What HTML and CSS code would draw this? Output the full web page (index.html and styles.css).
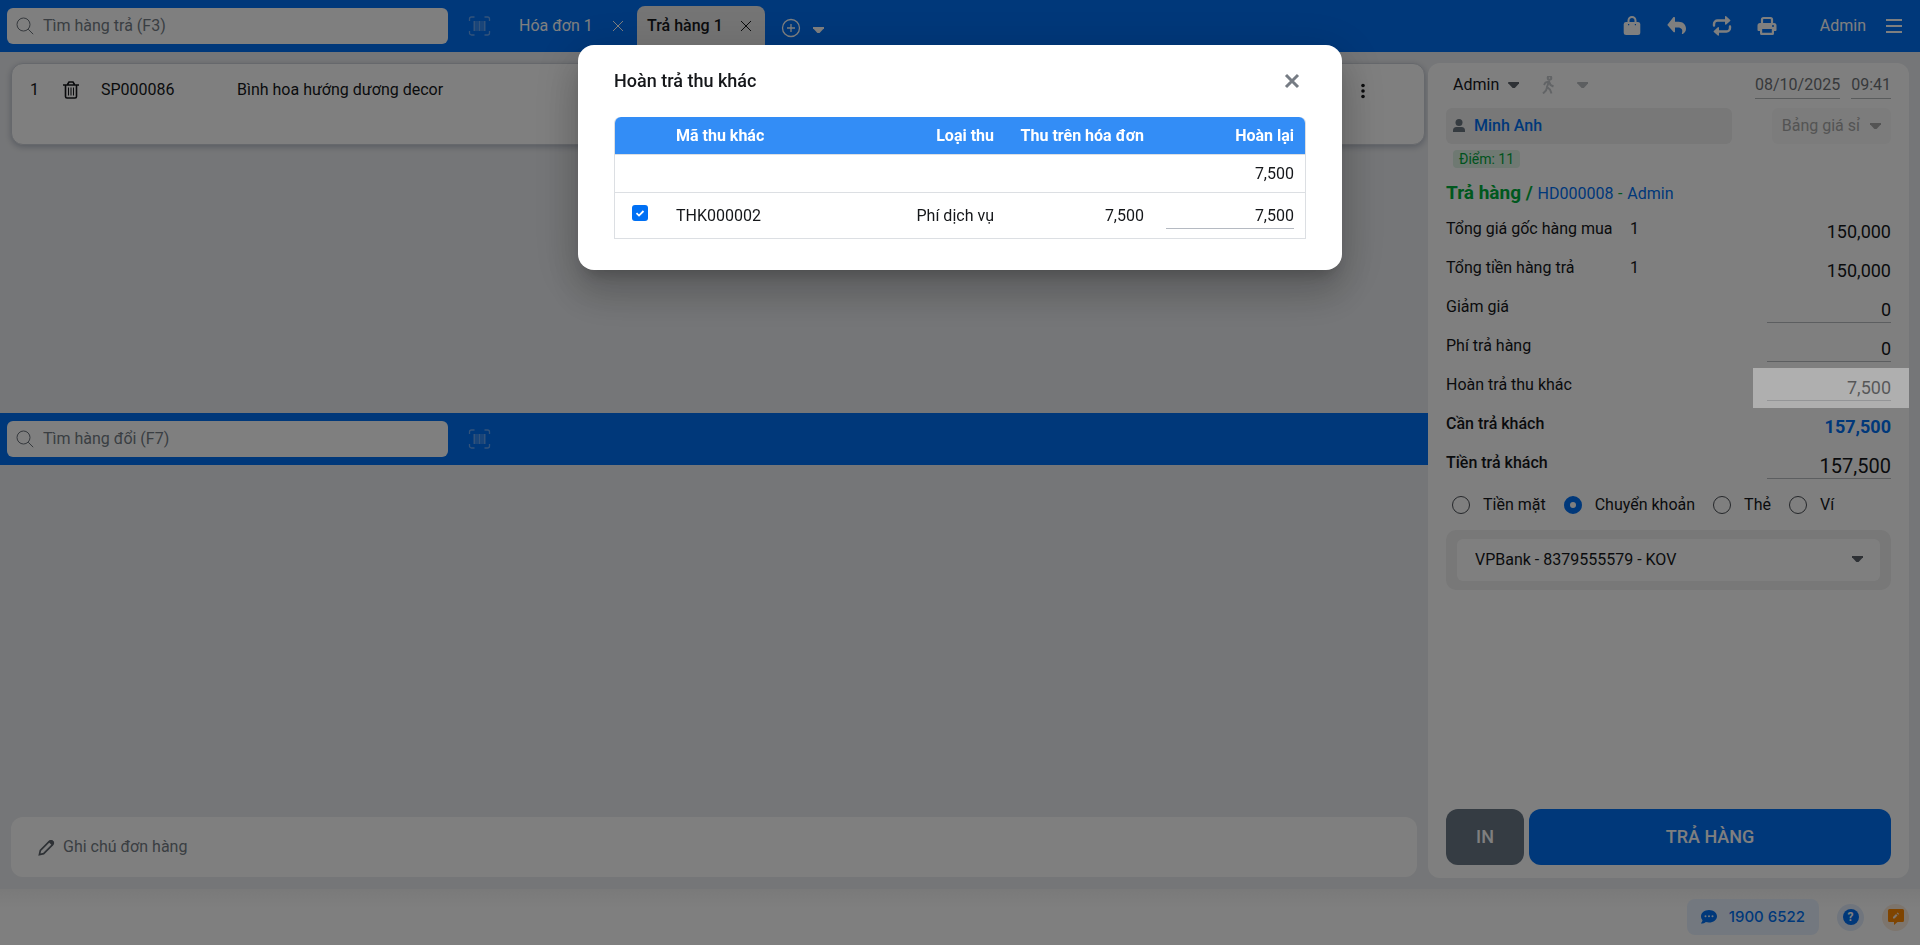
FILE: index.html
```html
<!DOCTYPE html>
<html lang="vi">

<head>
    <meta charset="UTF-8">
    <meta name="viewport" content="width=device-width, initial-scale=1">
    <title>Trả hàng</title>
    <link rel="stylesheet" href="styles.css">
</head>

<body>

    <header class="topbar">
        <label class="search">
            <svg class="search-icon" viewBox="0 0 18 18"><circle cx="7.5" cy="7.5" r="6.5" /><path d="M12.2 12.2l5 5" /></svg>
            <input type="text" placeholder="Tìm hàng trả (F3)" aria-label="Tìm hàng trả">
        </label>
        <button class="barcode" aria-label="Quét mã vạch">
            <svg viewBox="0 0 22 20"><path class="frame" d="M1 5V3a2 2 0 0 1 2-2h3M16 1h3a2 2 0 0 1 2 2v2M21 15v2a2 2 0 0 1-2 2h-3M6 19H3a2 2 0 0 1-2-2v-2" /><path class="bars" d="M5 5h2v10H5zM8 5h1v10H8zM10 5h2v10h-2zM13 5h1v10h-1zM15 5h2v10h-2z" /></svg>
        </button>
        <nav class="tabs">
            <div class="tab">
                <a href="#">Hóa đơn 1</a>
                <button aria-label="Đóng"><svg viewBox="0 0 12 12"><path d="M1 1l10 10M11 1L1 11" /></svg></button>
            </div>
            <div class="tab active">
                <a href="#">Trả hàng 1</a>
                <button aria-label="Đóng"><svg viewBox="0 0 12 12"><path d="M1 1l10 10M11 1L1 11" /></svg></button>
            </div>
            <button class="add-tab" aria-label="Thêm">
                <svg viewBox="0 0 20 20"><circle cx="10" cy="10" r="8.5" /><path d="M10 6v8M6 10h8" /></svg>
            </button>
            <button class="more-tab" aria-label="Chọn loại"><span class="caret"></span></button>
        </nav>
        <div class="tools">
            <button aria-label="Đặt hàng">
                <svg viewBox="0 0 20 20"><path d="M6.5 8V4.500a3.500 3.500 0 0 1 7 0v3.500" fill="none" stroke="currentColor" stroke-width="2" /><path fill-rule="evenodd" d="M4 6h12a2.300 2.300 0 0 1 2.300 2v8.500a2.500 2.500 0 0 1-2.500 2.500H4.200a2.500 2.500 0 0 1-2.500-2.500V8A2.300 2.300 0 0 1 4 6zm2 2v1.200h1.200V8zm6.800 0v1.200H14V8z" /></svg>
            </button>
            <button aria-label="Trả hàng">
                <svg viewBox="0 0 20 20"><path d="M8 1.800v3.900h3.500c4.500 0 7.500 2.800 7.500 7 0 2.300-1.300 4.200-3.200 5.300-.6.300-1.100-.2-.9-.7 1.300-3.500-.6-5.700-3.900-5.700H8v3.800c0 .8-.9 1.200-1.500.7L.8 9.600c-.5-.4-.5-1 0-1.400L6.500 1.100c.6-.5 1.500-.1 1.500.7z" /></svg>
            </button>
            <button aria-label="Đồng bộ">
                <svg viewBox="0 0 20 20"><path d="M2 9.500V8a3.500 3.500 0 0 1 3.500-3.500H14M18 10.500V12a3.500 3.500 0 0 1-3.500 3.500H6" fill="none" stroke="currentColor" stroke-width="2.400" stroke-linecap="round" /><path d="M13 .8c0-.6.7-.9 1.200-.5l4 3.600c.3.300.3.800 0 1.100l-4 3.600c-.5.400-1.200.1-1.200-.5zM7 11.800c0-.6-.7-.9-1.200-.5l-4 3.600c-.3.300-.3.800 0 1.100l4 3.600c.5.400 1.200.1 1.200-.5z" /></svg>
            </button>
            <button aria-label="In">
                <svg viewBox="0 0 20 20"><path d="M5 7V3.500A1.500 1.500 0 0 1 6.500 2h7A1.500 1.500 0 0 1 15 3.500V7" fill="none" stroke="currentColor" stroke-width="2.200" /><path fill-rule="evenodd" d="M3 7h14a2.500 2.500 0 0 1 2.500 2.500V14a1 1 0 0 1-1 1H17v2.500a1.500 1.500 0 0 1-1.500 1.500h-11A1.500 1.500 0 0 1 3 17.500V15H1.500a1 1 0 0 1-1-1V9.500A2.500 2.500 0 0 1 3 7zm2.200 6v3.800h9.600V13zM16 9a1 1 0 1 0 0 2 1 1 0 0 0 0-2z" /></svg>
            </button>
            <a class="user" href="#">Admin</a>
            <button class="burger" aria-label="Menu">
                <svg viewBox="0 0 18 16"><path d="M1 2h16M1 8h16M1 14h16" /></svg>
            </button>
        </div>
    </header>

    <main class="workspace">
        <section class="left">
            <div class="cart">
                <article class="item">
                    <span class="item-no">1</span>
                    <button class="item-delete" aria-label="Xóa">
                        <svg viewBox="0 0 16 18"><path d="M0 4h16M4.500 3.500L6 1h4l1.500 2.500M2.500 4v11.500A1.500 1.500 0 0 0 4 17h8a1.500 1.500 0 0 0 1.500-1.500V4" stroke-width="1.600" /><path d="M5.500 6.500v8M8 6.500v8M10.500 6.500v8" stroke-width="1" /></svg>
                    </button>
                    <span class="item-code">SP000086</span>
                    <span class="item-name">Bình hoa hướng dương decor</span>
                    <button class="item-more" aria-label="Thêm"><svg viewBox="0 0 4 16"><circle cx="2" cy="2.500" r="1.800" /><circle cx="2" cy="8" r="1.800" /><circle cx="2" cy="13.500" r="1.800" /></svg></button>
                </article>
            </div>
            <div class="exchange">
                <label class="search">
                    <svg class="search-icon" viewBox="0 0 18 18"><circle cx="7.500" cy="7.500" r="6.500" /><path d="M12.200 12.200l5 5" /></svg>
                    <input type="text" placeholder="Tìm hàng đổi (F7)" aria-label="Tìm hàng đổi">
                </label>
                <button class="barcode" aria-label="Quét mã vạch">
                    <svg viewBox="0 0 22 20"><path class="frame" d="M1 5V3a2 2 0 0 1 2-2h3M16 1h3a2 2 0 0 1 2 2v2M21 15v2a2 2 0 0 1-2 2h-3M6 19H3a2 2 0 0 1-2-2v-2" /><path class="bars" d="M5 5h2v10H5zM8 5h1v10H8zM10 5h2v10h-2zM13 5h1v10h-1zM15 5h2v10h-2z" /></svg>
                </button>
            </div>
            <label class="note">
                <svg viewBox="0 0 18 18"><path d="M1.500 16.500l1-4.500L12 2.500a1.800 1.800 0 0 1 2.500 0l1 1a1.800 1.800 0 0 1 0 2.500L6 15.500z" fill="none" stroke="currentColor" stroke-width="1.800" /><path d="M11 3l2-2h2l2 2v2l-2 2z" /></svg>
                <input type="text" placeholder="Ghi chú đơn hàng" aria-label="Ghi chú đơn hàng">
            </label>
        </section>

        <aside class="panel">
            <div class="seller">
                <button>Admin <span class="caret"></span></button>
                <button class="channel" aria-label="Kênh bán">
                    <svg viewBox="0 0 14 18"><circle cx="8.500" cy="2" r="1.800" /><path d="M3 9l1.500-2.500L8 5.500l1.500 3.500 3 1.500M8 5.500L6 11l3 2.500 1.500 4M6 11.500l-1 3L2 17.500" /></svg>
                    <span class="caret"></span>
                </button>
                <div class="date"><span>08/10/2025</span><span>09:41</span></div>
            </div>

            <div class="customer">
                <a class="customer-name" href="#">
                    <svg viewBox="0 0 12 14"><circle cx="6" cy="3.500" r="3.500" /><path d="M0 13v-1.500A3.500 3.500 0 0 1 3.500 8h5a3.500 3.500 0 0 1 3.500 3.500V13z" /></svg>
                    Minh Anh
                </a>
                <button class="pricebook">Bảng giá sỉ <span class="caret"></span></button>
            </div>
            <span class="points">Điểm: 11</span>

            <h1 class="panel-title">Trả hàng / <a href="#">HD000008</a> <small>-</small> <a href="#">Admin</a></h1>

            <div class="rows">
                <div class="row"><span>Tổng giá gốc hàng mua</span><span class="qty">1</span><span class="money">150,000</span></div>
                <div class="row"><span>Tổng tiền hàng trả</span><span class="qty">1</span><span class="money">150,000</span></div>
                <div class="row"><label for="giamgia">Giảm giá</label><input class="money" id="giamgia" type="text" value="0"></div>
                <div class="row"><label for="phi">Phí trả hàng</label><input class="money" id="phi" type="text" value="0"></div>
                <div class="row"><span>Hoàn trả thu khác</span><div class="lit"><button class="money">7,500</button></div></div>
                <div class="row bold"><span>Cần trả khách</span><span class="money total">157,500</span></div>
                <div class="row bold"><label for="tientra">Tiền trả khách</label><input class="money paid" id="tientra" type="text" value="157,500"></div>
            </div>

            <div class="methods">
                <label><input type="radio" name="method">Tiền mặt</label>
                <label><input type="radio" name="method" checked>Chuyển khoản</label>
                <label><input type="radio" name="method">Thẻ</label>
                <label><input type="radio" name="method">Ví</label>
            </div>

            <div class="bank">
                <select aria-label="Tài khoản">
                    <option>VPBank - 8379555579 - KOV</option>
                </select>
                <span class="caret"></span>
            </div>

            <div class="actions">
                <button class="btn-print">IN</button>
                <button class="btn-return">TRẢ HÀNG</button>
            </div>
        </aside>
    </main>

    <footer class="footer">
        <a class="hotline" href="#">
            <svg viewBox="0 0 16 14"><path fill-rule="evenodd" d="M8 0c4.400 0 8 2.800 8 6.200s-3.600 6.300-8 6.300c-1.100 0-2.200-.2-3.200-.5C3.700 12.900 2 13.600.3 13.600c-.3 0-.4-.4-.2-.6.800-.9 1.300-1.900 1.400-2.800C.6 9.100 0 7.700 0 6.200 0 2.800 3.600 0 8 0zM4.500 5.200a1 1 0 1 0 0 2 1 1 0 0 0 0-2zm3.500 0a1 1 0 1 0 0 2 1 1 0 0 0 0-2zm3.500 0a1 1 0 1 0 0 2 1 1 0 0 0 0-2z" /></svg>
            1900 6522
        </a>
        <button class="round help" aria-label="Trợ giúp"><span>?</span></button>
        <button class="round feedback" aria-label="Góp ý">
            <svg viewBox="0 0 16 16"><path fill-rule="evenodd" d="M1.500 0h13A1.500 1.500 0 0 1 16 1.500v10a1.500 1.500 0 0 1-1.500 1.500H9.500L6 16v-3H1.500A1.500 1.500 0 0 1 0 11.500v-10A1.500 1.500 0 0 1 1.500 0zM5 9.500h1.500l3-3L8 5 5 8zM8.700 4.300l1.500 1.500.9-.9-1.500-1.500z" /></svg>
        </button>
    </footer>

    <div class="overlay">
        <section class="modal" role="dialog" aria-labelledby="modal-title">
            <div class="modal-head">
                <h2 id="modal-title">Hoàn trả thu khác</h2>
                <button aria-label="Đóng"><svg viewBox="0 0 16 16"><path d="M2 2l12 12M14 2L2 14" /></svg></button>
            </div>
            <table>
                <thead>
                    <tr>
                        <th class="col-check"></th>
                        <th class="col-code">Mã thu khác</th>
                        <th class="col-type">Loại thu</th>
                        <th class="col-bill">Thu trên hóa đơn</th>
                        <th class="col-back">Hoàn lại</th>
                    </tr>
                </thead>
                <tbody>
                    <tr class="sum">
                        <td></td>
                        <td></td>
                        <td></td>
                        <td></td>
                        <td>7,500</td>
                    </tr>
                    <tr>
                        <td class="check"><input type="checkbox" checked aria-label="THK000002"></td>
                        <td class="code">THK000002</td>
                        <td>Phí dịch vụ</td>
                        <td>7,500</td>
                        <td><input type="text" value="7,500" aria-label="Hoàn lại"></td>
                    </tr>
                </tbody>
            </table>
        </section>
    </div>

</body>

</html>
```
FILE: styles.css
```css
* {
    box-sizing: border-box;
}

body {
    margin: 0;
    min-height: 100vh;
    display: flex;
    flex-direction: column;
    background-color: #ebedf0;
    font-family: Roboto, sans-serif;
    font-size: 16px;
    line-height: 20px;
    color: #15171a;
}

button,
input,
select {
    font: inherit;
    color: inherit;
    border: 0;
    padding: 0;
    background: none;
}

button {
    cursor: pointer;
}

a {
    color: inherit;
    text-decoration: none;
}

svg {
    display: block;
    fill: currentColor;
    flex-shrink: 0;
}

.caret {
    display: inline-block;
    flex-shrink: 0;
    width: 11px;
    height: 6px;
    background-color: currentColor;
    clip-path: polygon(0 0, 100% 0, 100% 20%, 60% 100%, 40% 100%, 0 20%);
}

/* top bar */
.topbar {
    height: 52px;
    padding-left: 7px;
    padding-right: 17px;
    display: flex;
    align-items: center;
    background-color: #0070f4;
    color: white;
}

.search {
    width: 441px;
    height: 36px;
    padding: 0 9px;
    display: flex;
    align-items: center;
    gap: 9px;
    background-color: white;
    border-radius: 6px;
    color: #6b727a;
}

.search-icon {
    width: 18px;
    height: 18px;
    fill: none;
    stroke: #6b727a;
    stroke-width: 1;
}

.search input {
    flex: 1;
    min-width: 0;
}

input::placeholder {
    color: #747c85;
    opacity: 1;
}

.barcode {
    margin-left: 20px;
    color: #66a6f5;
}

.barcode svg {
    width: 23px;
    height: 20px;
}

.barcode .frame {
    fill: none;
    stroke: currentColor;
    stroke-width: 1.3;
}

.tabs {
    display: flex;
    align-self: stretch;
    margin-left: 18px;
}

.tab {
    width: 128px;
    margin-top: 6px;
    padding: 0 13px 6px 10px;
    display: flex;
    align-items: center;
    justify-content: space-between;
    border-radius: 8px 8px 0 0;
}

.tab.active {
    background-color: #ebebeb;
    color: #15171a;
    font-weight: 500;
}

.tab svg {
    width: 12px;
    height: 12px;
    stroke: currentColor;
    stroke-width: 1;
}

.add-tab {
    margin: 4px 12px 0 16px;
}

.add-tab svg {
    width: 20px;
    height: 20px;
    fill: none;
    stroke: currentColor;
    stroke-width: 1.3;
}

.more-tab {
    margin-top: 4px;
}

.tools {
    margin-left: auto;
    display: flex;
    align-items: center;
    gap: 25px;
}

.tools svg {
    width: 20px;
    height: 20px;
}

.user {
    margin-left: 18px;
    margin-right: -6px;
}

.tools .burger svg {
    width: 18px;
    height: 16px;
    stroke: currentColor;
    stroke-width: 2;
}

/* left column */
.workspace {
    flex: 1;
    display: flex;
}

.left {
    flex: 1;
    min-width: 0;
    display: flex;
    flex-direction: column;
}

.cart {
    height: 361px;
    padding: 11px 3px 0 11px;
}

.item {
    height: 82px;
    padding: 16px 59px 0 18px;
    display: flex;
    align-items: flex-start;
    background-color: white;
    border: 1px solid #cdd1d8;
    border-radius: 12px;
    box-shadow: 0 2px 6px rgba(0, 20, 60, .25);
}

.item-no {
    width: 33px;
}

.item-delete {
    width: 38px;
}

.item-delete svg {
    width: 16px;
    height: 18px;
    margin-top: 1px;
    fill: none;
    stroke: currentColor;
}

.item-code {
    width: 136px;
}

.item-more {
    margin-left: auto;
}

.item-more svg {
    width: 4px;
    height: 16px;
    margin-top: 3px;
}

.exchange {
    height: 52px;
    padding-left: 7px;
    display: flex;
    align-items: center;
    background-color: #0070f4;
}

.note {
    height: 60px;
    margin: auto 11px 12px;
    padding: 0 27px;
    display: flex;
    align-items: center;
    gap: 8px;
    background-color: white;
    border-radius: 12px;
    color: #5c636b;
}

.note svg {
    width: 17px;
    height: 17px;
}

.note input {
    flex: 1;
}

/* right column */
.panel {
    width: 481px;
    margin: 11px 11px 11px 0;
    padding: 8px 18px 13px;
    display: flex;
    flex-direction: column;
    background-color: white;
    border-radius: 12px;
}

.seller {
    padding-left: 7px;
    height: 28px;
    display: flex;
    align-items: center;
}

.seller button {
    display: flex;
    align-items: center;
    gap: 9px;
}

.seller button .caret {
    color: #5c636b;
}

.seller .channel {
    margin-left: 22px;
    gap: 22px;
    color: #c4c8cc;
}

.channel svg {
    width: 14px;
    height: 18px;
    stroke: currentColor;
    stroke-width: 2;
    fill: none;
}

.seller .channel .caret {
    color: #b8bcc0;
}

.date {
    margin-left: auto;
    display: flex;
    gap: 11px;
    color: #6f7377;
}

.date span {
    padding: 4px 0 3px;
    border-bottom: 1px solid #b5b8bb;
}

.customer {
    margin-top: 9px;
    display: flex;
    justify-content: space-between;
}

.customer-name {
    width: 286px;
    height: 36px;
    padding-left: 7px;
    display: flex;
    align-items: center;
    gap: 9px;
    background-color: #f0f0f0;
    border-radius: 6px;
    color: #0070f4;
    font-weight: 500;
}

.customer-name svg {
    width: 12px;
    height: 14px;
    color: #6b7680;
}

.pricebook {
    height: 36px;
    padding: 0 10px;
    display: flex;
    align-items: center;
    gap: 10px;
    background-color: #f9f9f9;
    border-radius: 6px;
    color: #a8a8a8;
}

.points {
    align-self: flex-start;
    margin: 6px 0 0 7px;
    padding: 0 6px;
    font-size: 14px;
    line-height: 18px;
    background-color: #def3e4;
    border-radius: 4px;
    color: #00a63c;
}

.panel-title {
    margin: 13px 0 2px;
    font-size: 19px;
    line-height: 24px;
    font-weight: 700;
    color: #00b03c;
}

.panel-title a,
.panel-title small {
    font-size: 16px;
    font-weight: 400;
}

.panel-title a {
    color: #0070f4;
}

.row {
    height: 39px;
    display: flex;
    align-items: flex-start;
    padding-top: 11px;
}

.row > :first-child {
    width: 184px;
}

.money {
    width: 124px;
    height: 24px;
    margin: 3px 0 0 auto;
    font-size: 18px;
    line-height: 20px;
    text-align: right;
}

input.money,
button.money {
    margin-top: 2px;
    padding-bottom: 2px;
    border-bottom: 1px solid #b9bcc0;
}

/* this cell stays lit above the backdrop */
.lit {
    position: relative;
    z-index: 20;
    height: 40px;
    margin: -7px -18px 0 auto;
    padding: 7px 18px 0 14px;
    background-color: white;
    opacity: .38;
}

.row.bold {
    font-weight: 500;
}

.row .total {
    color: #0070f4;
    font-weight: 700;
}

.row .paid {
    font-size: 20px;
    font-weight: 400;
}

.methods {
    margin-top: 4px;
    padding-left: 6px;
    height: 40px;
    display: flex;
    align-items: center;
    gap: 18px;
}

.methods label {
    display: flex;
    align-items: center;
}

.methods input {
    appearance: none;
    width: 18px;
    height: 18px;
    margin: 0 13px 0 0;
    border: 1px solid #4a4f55;
    border-radius: 50%;
}

.methods input:checked {
    border: 6px solid #0070f4;
}

.bank {
    margin-top: 5px;
    padding: 9px 11px;
    position: relative;
    background-color: #f0f0f0;
    border-radius: 10px;
}

.bank select {
    appearance: none;
    display: block;
    width: 100%;
    height: 42px;
    padding: 0 18px;
    background-color: white;
    border-radius: 6px;
}

.bank .caret {
    position: absolute;
    right: 28px;
    top: 26px;
    color: #5c636b;
    pointer-events: none;
}

.actions {
    margin-top: auto;
    display: flex;
    gap: 5px;
}

.actions button {
    height: 56px;
    border-radius: 12px;
    font-size: 18px;
    font-weight: 500;
    color: white;
}

.btn-print {
    width: 78px;
    background-color: #6a7886;
}

.btn-return {
    flex: 1;
    background-color: #0070f4;
}

/* footer */
.footer {
    height: 56px;
    padding: 0 11px;
    display: flex;
    align-items: center;
    justify-content: flex-end;
    gap: 18px;
    background-color: white;
    background-image: linear-gradient(#f4f4f4, white 20px);
}

.hotline {
    height: 36px;
    padding: 0 14px;
    display: flex;
    align-items: center;
    gap: 12px;
    border-radius: 8px;
    background-color: #e6f1fe;
    color: #0070f4;
    font-family: Inter, sans-serif;
    font-size: 15px;
    font-weight: 500;
}

.hotline svg {
    width: 16px;
    height: 14px;
}

.round {
    width: 27px;
    height: 27px;
    border-radius: 50%;
    display: flex;
    align-items: center;
    justify-content: center;
}

.help {
    background-color: #e0ebfa;
}

.help span {
    width: 16px;
    height: 16px;
    border-radius: 50%;
    background-color: #0070f4;
    color: white;
    font-size: 12px;
    line-height: 16px;
    font-weight: 700;
}

.feedback {
    background-color: #faeadb;
    color: #ff8800;
}

.feedback svg {
    width: 16px;
    height: 16px;
}

/* modal */
.overlay {
    position: fixed;
    top: 0;
    right: 0;
    bottom: 0;
    left: 0;
    z-index: 10;
    padding-top: 45px;
    background-color: rgba(0, 0, 0, .5);
}

.modal {
    width: 764px;
    max-width: 100%;
    margin: 0 auto;
    padding: 24px 36px 31px;
    background-color: white;
    border-radius: 16px;
    box-shadow: 0 11px 15px -7px rgba(0, 0, 0, .2), 0 24px 38px 3px rgba(0, 0, 0, .14), 0 9px 46px 8px rgba(0, 0, 0, .12);
}

.modal-head {
    height: 24px;
    margin-bottom: 24px;
    display: flex;
    align-items: center;
    justify-content: space-between;
}

.modal-head h2 {
    margin: 0;
    font-size: 18px;
    font-weight: 500;
}

.modal-head button {
    margin-right: 6px;
    color: #767c84;
}

.modal-head svg {
    width: 16px;
    height: 16px;
    stroke: currentColor;
    stroke-width: 3;
}

table {
    width: 100%;
    table-layout: fixed;
    border-spacing: 0;
    border: 1px solid #dcdfe3;
    border-top: 0;
    border-radius: 6px 6px 0 0;
}

th,
td {
    padding: 0 11px;
    text-align: right;
}

th {
    height: 37px;
    background-color: #338df6;
    color: white;
    font-weight: 700;
}

th:first-child {
    border-top-left-radius: 6px;
}

th:last-child {
    border-top-right-radius: 6px;
}

td {
    height: 46px;
    border-top: 1px solid #dcdfe3;
}

.sum td {
    height: 38px;
}

.col-check {
    width: 50px;
}

.col-code,
.code {
    text-align: left;
}

.col-type,
.col-bill,
.col-back {
    width: 150px;
}

.check {
    text-align: left;
    padding-left: 17px;
}

.check input {
    appearance: none;
    display: block;
    width: 16px;
    height: 16px;
    margin: 0 0 6px;
    border-radius: 3px;
    background: #0070f4 url("data:image/svg+xml,%3Csvg xmlns='http://www.w3.org/2000/svg' viewBox='0 0 16 16'%3E%3Cpath d='M4.500 8.200l2.500 2.400 4.500-4.600' fill='none' stroke='white' stroke-width='1.800'/%3E%3C/svg%3E");
}

td input[type="text"] {
    display: block;
    width: 100%;
    height: 26px;
    text-align: right;
    border-bottom: 1px solid #b5bac2;
}
```
